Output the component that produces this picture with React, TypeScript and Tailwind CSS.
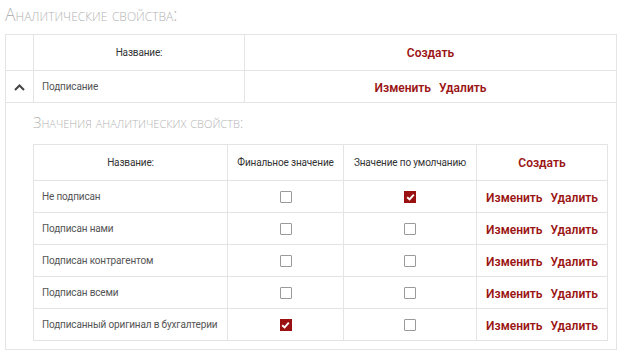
import React from "react";

const red = "text-[#9b1515]";

function Box({ checked }: { checked?: boolean }) {
  if (checked)
    return (
      <span className="inline-flex h-[12px] w-[12px] items-center justify-center bg-[#9b1111] align-middle">
        <svg width="9" height="8" viewBox="0 0 9 8">
          <path d="M1.2 4.2 L3.6 6.4 L7.8 1.6" stroke="#fff" strokeWidth="1.9" fill="none" />
        </svg>
      </span>
    );
  return <span className="inline-block h-[12px] w-[12px] rounded-[1px] border border-[#9a9a9a] bg-white align-middle" />;
}

function Actions() {
  return (
    <span className={`font-semibold text-[12px] ${red} whitespace-nowrap`}>
      Изменить<span className="inline-block w-[8px]" />Удалить
    </span>
  );
}

const rows: [string, boolean, boolean][] = [
  ["Не подписан", false, true],
  ["Подписан нами", false, false],
  ["Подписан контрагентом", false, false],
  ["Подписан всеми", false, false],
  ["Подписанный оригинал в бухгалтерии", true, false],
];

const title = { fontFamily: '"Open Sans", sans-serif' };

export default function App() {
  const bd = "border border-[#e4e4e4]";
  const txt = "text-[10px] tracking-[-0.15px]";
  return (
    <div
      className="bg-white w-[624px] h-[353px] pl-[5px] pt-[4px] text-[#333]"
      style={{ fontFamily: 'Roboto, "Noto Sans", sans-serif' }}
    >
      <div style={title} className="h-[30px] text-[17.5px] font-light text-[#b3b3b3] [font-variant:small-caps] leading-[20px]">
        Аналитические свойства:
      </div>
      <table className="table-fixed border-collapse w-[612px]">
        <colgroup>
          <col className="w-[28px]" />
          <col className="w-[211px]" />
          <col />
        </colgroup>
        <tbody>
          <tr className="h-[36px]">
            <td className={bd}></td>
            <td className={`${bd} text-center ${txt} text-[#333]`}>Название:</td>
            <td className={`${bd} text-center font-semibold text-[12px] ${red}`}>Создать</td>
          </tr>
          <tr className="h-[32px]">
            <td className={`${bd} text-center`}>
              <svg width="11" height="7" viewBox="0 0 11 7" className="inline-block ml-[-1px]">
                <path d="M1 6 L5.5 1.5 L10 6" stroke="#444" strokeWidth="2" fill="none" />
              </svg>
            </td>
            <td className={`${bd} pl-[8px] ${txt} text-[#555]`}>Подписание</td>
            <td className={`${bd} text-center`}>
              <Actions />
            </td>
          </tr>
          <tr>
            <td colSpan={3} className={`${bd} pl-[27px] pr-[8px] pb-[8px]`}>
              <div style={title} className="h-[41px] pt-[9px] text-[15px] font-light text-[#b3b3b3] [font-variant:small-caps] leading-[20px]">
                Значения аналитических свойств:
              </div>
              <table className="table-fixed border-collapse w-[575px]">
                <colgroup>
                  <col className="w-[194px]" />
                  <col className="w-[116px]" />
                  <col className="w-[133px]" />
                  <col />
                </colgroup>
                <tbody>
                  <tr className="h-[36px]">
                    <td className={`${bd} text-center ${txt} text-[#333]`}>Название:</td>
                    <td className={`${bd} text-center ${txt} text-[#333] whitespace-nowrap`}>Финальное значение</td>
                    <td className={`${bd} text-center ${txt} text-[#333] whitespace-nowrap`}>Значение по умолчанию</td>
                    <td className={`${bd} text-center font-semibold text-[12px] ${red}`}>Создать</td>
                  </tr>
                  {rows.map(([name, fin, def]) => (
                    <tr key={name} className="h-[32px]">
                      <td className={`${bd} pl-[8px] ${txt} text-[#555] whitespace-nowrap`}>{name}</td>
                      <td className={`${bd} text-center leading-none`}>
                        <Box checked={fin} />
                      </td>
                      <td className={`${bd} text-center leading-none`}>
                        <Box checked={def} />
                      </td>
                      <td className={`${bd} text-center`}>
                        <Actions />
                      </td>
                    </tr>
                  ))}
                </tbody>
              </table>
            </td>
          </tr>
        </tbody>
      </table>
    </div>
  );
}
